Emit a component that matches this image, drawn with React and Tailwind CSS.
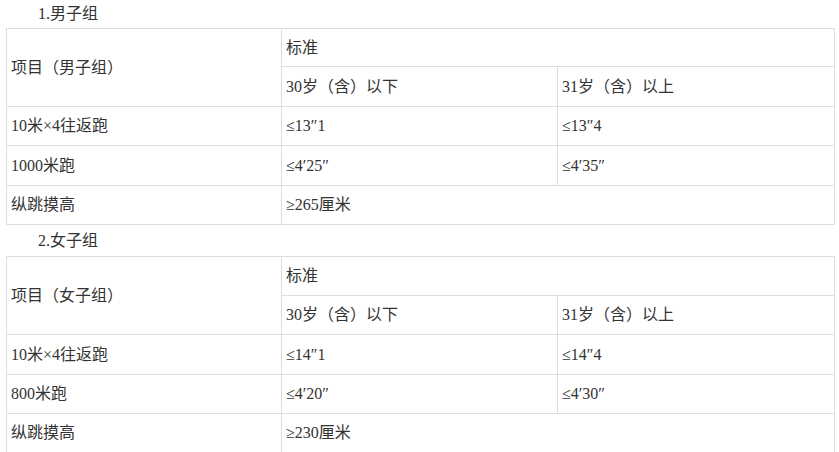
import React from "react";

const groups = [
  {
    title: "1.男子组",
    head: "项目（男子组）",
    titleH: "h-[28px]",
    heights: ["h-[38px]", "h-[40px]", "h-[39px]", "h-[40px]", "h-[39px]"],
    rows: [
      ["10米×4往返跑", "≤13″1", "≤13″4"],
      ["1000米跑", "≤4′25″", "≤4′35″"],
    ],
    jump: "≥265厘米",
  },
  {
    title: "2.女子组",
    head: "项目（女子组）",
    titleH: "h-[31px]",
    heights: ["h-[39px]", "h-[39px]", "h-[40px]", "h-[39px]", "h-[39px]"],
    rows: [
      ["10米×4往返跑", "≤14″1", "≤14″4"],
      ["800米跑", "≤4′20″", "≤4′30″"],
    ],
    jump: "≥230厘米",
  },
];

const cell = "flex items-center pl-[4px] border-r border-b border-[#dddddd]";

function Standard({ g }) {
  const [h1, h2, h3, h4, h5] = g.heights;
  return (
    <div>
      <div className={`${g.titleH} flex items-center pl-[38px]`}>{g.title}</div>
      <div className="ml-[6px] w-[829px] grid grid-cols-[275px_276px_277px] border-l border-t border-[#dddddd]">
        <div className={`${cell} row-span-2`}>{g.head}</div>
        <div className={`${cell} col-span-2 ${h1}`}>标准</div>
        <div className={`${cell} ${h2}`}>30岁（含）以下</div>
        <div className={`${cell} ${h2}`}>31岁（含）以上</div>
        {g.rows.map((r, i) => (
          <React.Fragment key={i}>
            <div className={`${cell} ${i === 0 ? h3 : h4}`}>{r[0]}</div>
            <div className={`${cell} ${i === 0 ? h3 : h4}`}>{r[1]}</div>
            <div className={`${cell} ${i === 0 ? h3 : h4}`}>{r[2]}</div>
          </React.Fragment>
        ))}
        <div className={`${cell} ${h5}`}>纵跳摸高</div>
        <div className={`${cell} col-span-2 ${h5}`}>{g.jump}</div>
      </div>
    </div>
  );
}

export default function App() {
  return (
    <div
      className="w-[839px] h-[452px] overflow-hidden bg-white text-[16px] leading-[20px] text-[#333333]"
      style={{ fontFamily: '"Liberation Serif", "Noto Sans CJK SC", serif' }}
    >
      {groups.map((g) => (
        <Standard key={g.title} g={g} />
      ))}
    </div>
  );
}
